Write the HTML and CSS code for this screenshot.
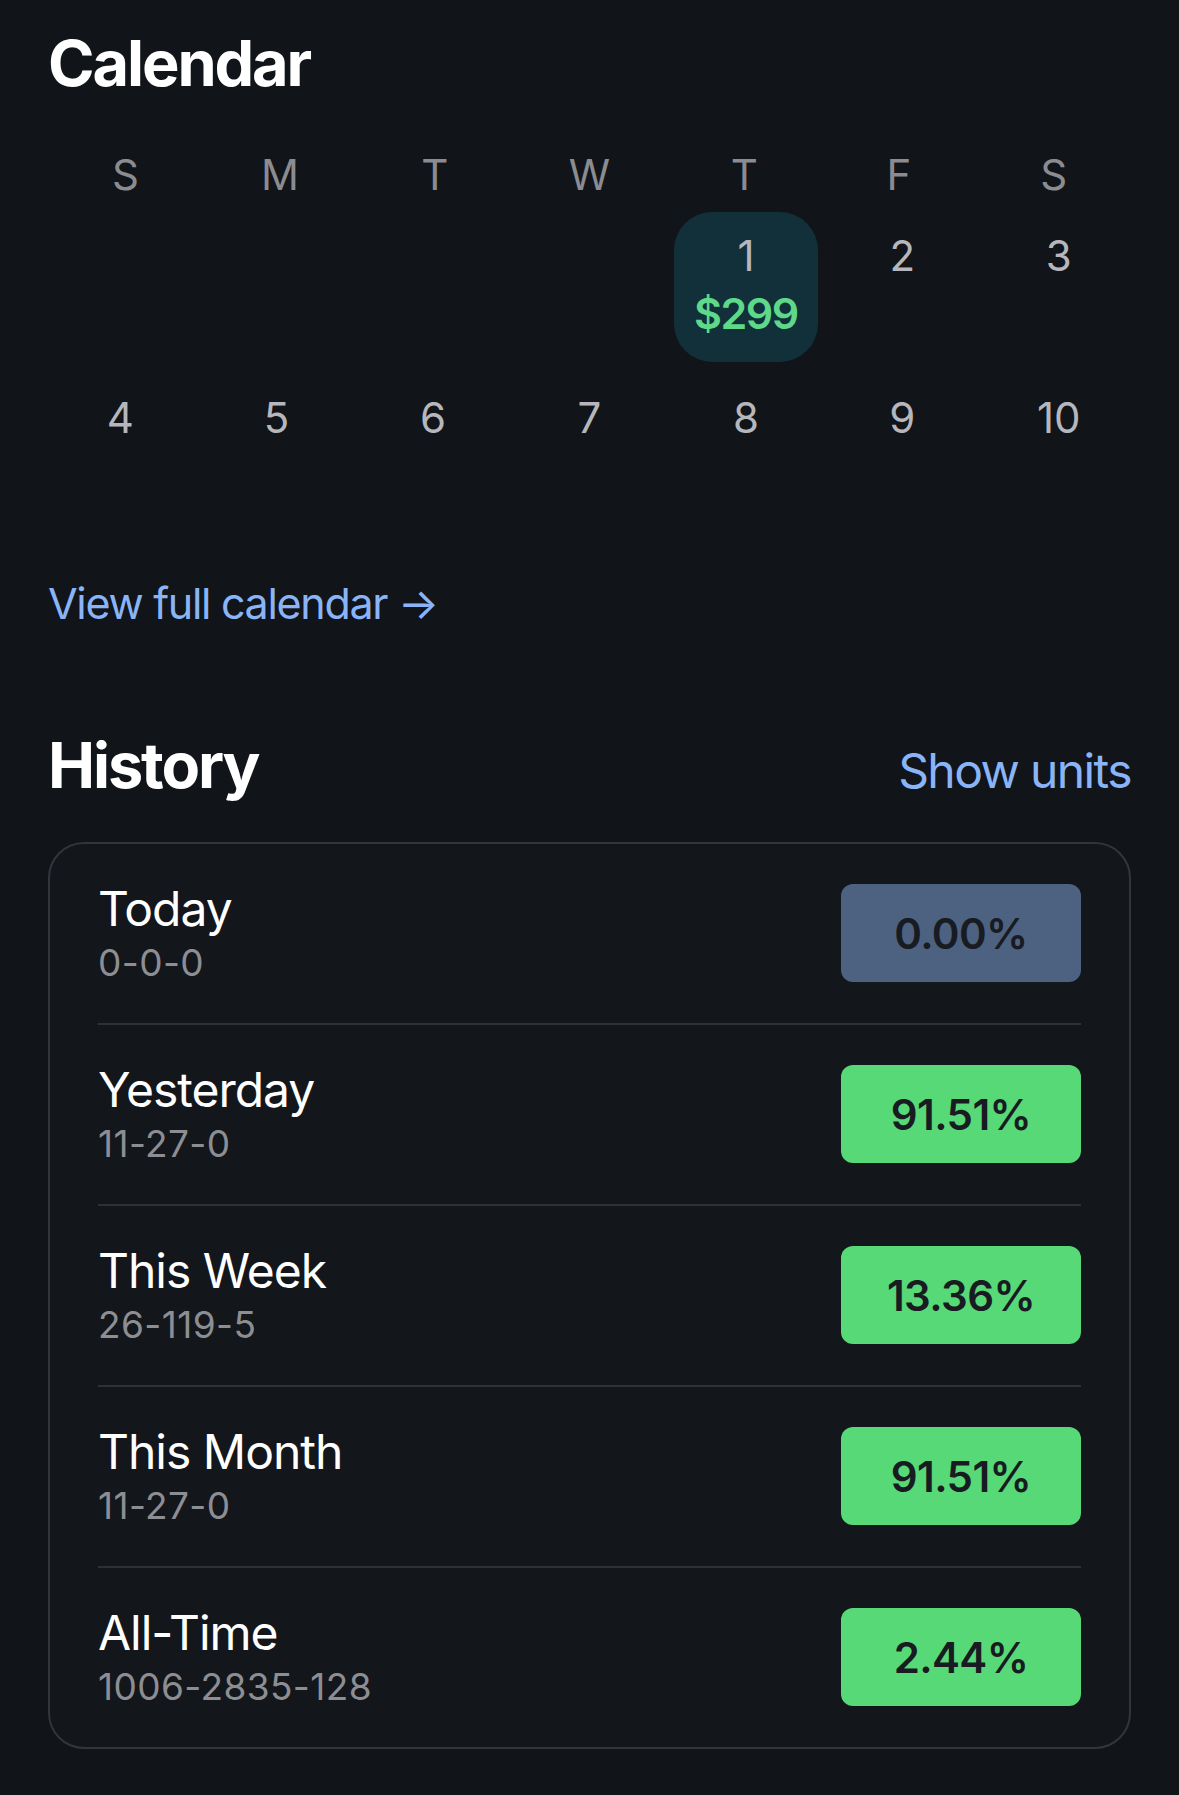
FILE: index.html
```html
<!DOCTYPE html>
<html lang="en">
<head>
<meta charset="utf-8">
<title>Calendar</title>
<link rel="stylesheet" href="styles.css">
</head>
<body>
<main class="page">
  <h1 class="section-title">Calendar</h1>
  <div class="weekdays">
    <div class="wd">S</div><div class="wd">M</div><div class="wd">T</div><div class="wd">W</div><div class="wd">T</div><div class="wd">F</div><div class="wd">S</div>
  </div>
  <div class="cal">
    <div class="day empty"></div>
    <div class="day empty"></div>
    <div class="day empty"></div>
    <div class="day empty"></div>
    <div class="day active"><span class="num">1</span><span class="amt">$299</span></div>
    <div class="day"><span class="num">2</span></div>
    <div class="day"><span class="num">3</span></div>
    <div class="day"><span class="num">4</span></div>
    <div class="day"><span class="num">5</span></div>
    <div class="day"><span class="num">6</span></div>
    <div class="day"><span class="num">7</span></div>
    <div class="day"><span class="num">8</span></div>
    <div class="day"><span class="num">9</span></div>
    <div class="day"><span class="num">10</span></div>
  </div>
  <a class="link full-link" href="#">View full calendar →</a>

  <div class="history-head">
    <h2 class="section-title">History</h2>
    <a class="link units" href="#">Show units</a>
  </div>
  <section class="card">
    <div class="row">
      <div class="row-text"><div class="row-title">Today</div><div class="row-sub">0-0-0</div></div>
      <div class="badge neutral">0.00%</div>
    </div>
    <div class="row">
      <div class="row-text"><div class="row-title">Yesterday</div><div class="row-sub">11-27-0</div></div>
      <div class="badge good">91.51%</div>
    </div>
    <div class="row">
      <div class="row-text"><div class="row-title">This Week</div><div class="row-sub">26-119-5</div></div>
      <div class="badge good">13.36%</div>
    </div>
    <div class="row">
      <div class="row-text"><div class="row-title">This Month</div><div class="row-sub">11-27-0</div></div>
      <div class="badge good">91.51%</div>
    </div>
    <div class="row">
      <div class="row-text"><div class="row-title">All-Time</div><div class="row-sub">1006-2835-128</div></div>
      <div class="badge good">2.44%</div>
    </div>
  </section>
</main>
</body>
</html>
```

FILE: styles.css
```css
* { box-sizing: border-box; }
html, body {
  margin: 0;
  padding: 0;
  background: #111419;
}
body {
  font-family: "Inter", "Noto Sans", sans-serif;
  color: #ffffff;
  width: 1179px;
  min-height: 1795px;
}
.page {
  padding: 25px 48px 40px;
}
.section-title {
  margin: 0;
  font-size: 63px;
  line-height: 76px;
  font-weight: 700;
  letter-spacing: -2.1px;
  color: #ffffff;
}
.weekdays {
  margin-top: 49px;
  display: grid;
  grid-template-columns: repeat(7, 1fr);
}
.wd {
  text-align: center;
  font-size: 42px;
  line-height: 50px;
  color: #8b8c91;
}
.cal {
  margin: 12px -6px 0;
  display: grid;
  grid-template-columns: repeat(7, 1fr);
  row-gap: 12px;
}
.day {
  height: 150px;
  margin: 0 6.5px;
  padding-top: 19px;
  display: flex;
  flex-direction: column;
  align-items: center;
  border-radius: 38px;
}
.day.active {
  background: #11303a;
}
.num {
  font-size: 42px;
  line-height: 50px;
  color: #b6b7bc;
}
.amt {
  margin-top: 7px;
  font-size: 43px;
  line-height: 50px;
  font-weight: 600;
  letter-spacing: -1.5px;
  color: #5ed889;
}
.link {
  color: #8ab4f8;
  text-decoration: none;
}
.full-link {
  display: block;
  margin-top: 53px;
  font-size: 43px;
  line-height: 52px;
  letter-spacing: -1.3px;
}
.history-head {
  margin-top: 98px;
  display: flex;
  justify-content: space-between;
  align-items: baseline;
}
.units {
  font-size: 48px;
  line-height: 56px;
  letter-spacing: -1.6px;
}
.card {
  margin-top: 39px;
  border: 2px solid #33353b;
  border-radius: 36px;
  background: #13161b;
  padding: 0 48px;
}
.row {
  display: flex;
  justify-content: space-between;
  align-items: center;
  padding: 37px 0 38px;
  border-bottom: 2px solid #2f3136;
}
.row:last-child {
  border-bottom: none;
}
.row-title {
  font-size: 48px;
  line-height: 56px;
  letter-spacing: -1px;
  color: #ffffff;
}
.row-sub {
  margin-top: 4px;
  font-size: 37px;
  line-height: 44px;
  letter-spacing: 0.4px;
  color: #8d8e93;
}
.badge {
  width: 240px;
  height: 98px;
  border-radius: 12px;
  display: flex;
  align-items: center;
  justify-content: center;
  font-size: 42px;
  font-weight: 600;
  color: #181b21;
  letter-spacing: -0.6px;
}
.badge.neutral { background: #4d6180; }
.badge.good { background: #57d977; }
```
